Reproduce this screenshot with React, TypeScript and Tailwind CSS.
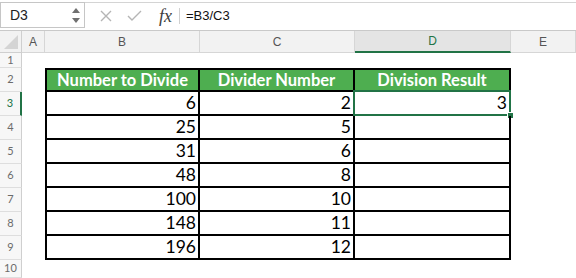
import { Fragment } from 'react';

const COLS = ['A', 'B', 'C', 'D', 'E'];

const DATA: [number, number, number | null][] = [
  [6, 2, 3],
  [25, 5, null],
  [31, 6, null],
  [48, 8, null],
  [100, 10, null],
  [148, 11, null],
  [196, 12, null],
];

const HEADERS = ['Number to Divide', 'Divider Number', 'Division Result'];

function RowLabel({ n, active }: { n: number; active?: boolean }) {
  return (
    <div
      className={`flex items-center justify-center border-b border-[#dedede] bg-[#f7f7f7] text-[11px] ${
        active ? 'border-r-2 border-r-[#217346] text-[#217346]' : 'border-r border-r-[#cfcfcf] text-[#6b6b6b]'
      }`}
    >
      {n}
    </div>
  );
}

function FormulaBar() {
  return (
    <div className="flex h-[31px] border-b border-[#c9c9c9] bg-white" style={{ fontFamily: '"Liberation Sans", Arial, sans-serif' }}>
      <div className="mt-[2px] flex h-[26px] w-[85px] items-center justify-between border border-[#c6c6c6] pl-[9px] pr-[4px]">
        <span className="text-[14px] text-[#222]">D3</span>
        <div className="flex flex-col gap-[5px]">
          <svg width="8" height="5" viewBox="0 0 8 5">
            <path d="M4 0 L8 5 L0 5 Z" fill="#707070" />
          </svg>
          <svg width="8" height="5" viewBox="0 0 8 5">
            <path d="M0 0 L8 0 L4 5 Z" fill="#707070" />
          </svg>
        </div>
      </div>
      <div className="mt-[2px] flex h-[26px] flex-1 items-center border-t border-[#d4d4d4]">
        <svg width="14" height="12" viewBox="0 0 14 12" className="ml-[14px]">
          <path d="M2 1 L12 11 M12 1 L2 11" stroke="#b5b5b5" strokeWidth="1.4" fill="none" />
        </svg>
        <svg width="15" height="11" viewBox="0 0 15 11" className="ml-[14px]">
          <path d="M1 6 L5 10 L14 1" stroke="#b5b5b5" strokeWidth="1.4" fill="none" />
        </svg>
        <span
          className="ml-[17px] text-[18px] italic leading-none text-[#3d3d3d]"
          style={{ fontFamily: '"Liberation Serif", "Times New Roman", serif' }}
        >
          fx
        </span>
        <div className="ml-[7px] h-[16px] w-px bg-[#d0d0d0]" />
        <span className="ml-[6px] text-[13px] text-[#111]">=B3/C3</span>
      </div>
    </div>
  );
}

export default function App() {
  return (
    <div className="h-[278px] w-[576px] overflow-hidden bg-white">
      <FormulaBar />
      <div
        className="grid grid-cols-[22px_23px_155px_155px_156px_65px] grid-rows-[22px_15px_repeat(8,24px)_1fr] h-[247px]"
        style={{ fontFamily: 'Lato, "Open Sans", sans-serif' }}
      >
        {/* column headers */}
        <div className="relative border-b border-r border-[#cfcfcf] bg-[#f2f2f2]">
          <svg width="14" height="14" viewBox="0 0 14 14" className="absolute bottom-[3px] right-[3px]">
            <path d="M14 0 L14 14 L0 14 Z" fill="#d4d4d4" />
          </svg>
        </div>
        {COLS.map((c) => (
          <div
            key={c}
            className={`flex items-center justify-center text-[12px] ${
              c === 'D'
                ? 'border-b-2 border-r border-b-[#217346] border-r-[#d6d6d6] bg-[#e4e4e4] text-[#217346]'
                : 'border-b border-r border-[#d6d6d6] bg-[#f2f2f2] text-[#555]'
            }`}
            style={{ fontFamily: '"Liberation Sans", Arial, sans-serif' }}
          >
            {c}
          </div>
        ))}

        {/* row 1 */}
        <RowLabel n={1} />
        <div className="col-span-5" />

        {/* row 2 - table header */}
        <RowLabel n={2} />
        <div />
        {HEADERS.map((h, i) => (
          <div
            key={h}
            className={`flex items-center justify-center border-y-2 border-r-2 border-black bg-[#4eae50] text-[16.5px] font-bold text-white ${
              i === 0 ? 'border-l-2' : ''
            }`}
          >
            {h}
          </div>
        ))}
        <div />

        {/* data rows */}
        {DATA.map((row, r) => (
          <Fragment key={r}>
            <RowLabel n={r + 3} active={r === 0} />
            <div />
            {row.map((v, i) => (
              <div
                key={i}
                className={`relative flex items-end justify-end border-b-2 border-r-2 border-black pb-[1px] pr-[2px] text-[17.5px] leading-[20px] text-black ${
                  i === 0 ? 'border-l-2' : ''
                }`}
              >
                {v}
                {r === 0 && i === 2 && (
                  <>
                    <div className="absolute -bottom-[2px] -left-[2px] -right-[2px] -top-[2px] border-2 border-[#217346]" />
                    <div className="absolute -bottom-[5px] -right-[5px] h-[7px] w-[7px] border border-white bg-[#217346]" />
                  </>
                )}
              </div>
            ))}
            <div />
          </Fragment>
        ))}

        {/* row 10 */}
        <RowLabel n={10} />
        <div className="col-span-5" />
      </div>
    </div>
  );
}
